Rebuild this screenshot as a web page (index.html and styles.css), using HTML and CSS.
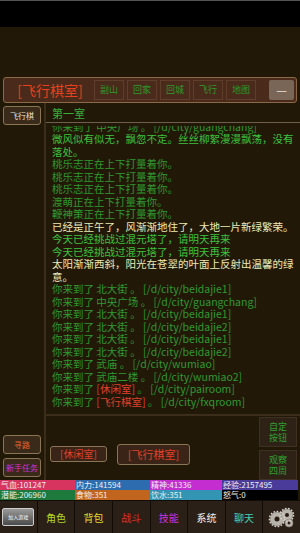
FILE: index.html
```html
<!DOCTYPE html>
<html lang="zh">
<head>
    <meta charset="UTF-8">
    <title>飞行棋室</title>
    <link rel="stylesheet" href="styles.css">
</head>
<body>
    <div class="statusbar"></div>
    <div class="spacer"></div>

    <div class="navbar">
        <div class="room-title">[飞行棋室]</div>
        <div class="nav-btn">副山</div>
        <div class="nav-btn">回家</div>
        <div class="nav-btn">回城</div>
        <div class="nav-btn">飞行</div>
        <div class="nav-btn">地图</div>
        <div class="menu-btn">—</div>
    </div>

    <div class="main">
        <div class="sidebar">
            <div class="side-btn">飞行棋</div>
        </div>
        <div class="content">
            <div class="room-name">第一室</div>
            <div class="log">
                <p>你来到了 中央广场 。 [/d/city/guangchang]</p>
                <p class="desc">微风似有似无，飘忽不定。丝丝柳絮漫漫飘荡，没有落处。</p>
                <p>桃乐志正在上下打量着你。</p>
                <p>桃乐志正在上下打量着你。</p>
                <p>桃乐志正在上下打量着你。</p>
                <p>渡萌正在上下打量着你。</p>
                <p>鞭神策正在上下打量着你。</p>
                <p class="sys">已经是正午了，风渐渐地住了，大地一片新绿繁荣。</p>
                <p class="desc">今天已经挑战过混元塔了，请明天再来</p>
                <p class="desc">今天已经挑战过混元塔了，请明天再来</p>
                <p class="sys">太阳渐渐西斜，阳光在苍翠的叶面上反射出温馨的绿意。</p>
                <p>你来到了 北大街 。 [/d/city/beidajie1]</p>
                <p>你来到了 中央广场 。 [/d/city/guangchang]</p>
                <p>你来到了 北大街 。 [/d/city/beidajie1]</p>
                <p>你来到了 北大街 。 [/d/city/beidajie2]</p>
                <p>你来到了 北大街 。 [/d/city/beidajie1]</p>
                <p>你来到了 北大街 。 [/d/city/beidajie2]</p>
                <p>你来到了 武庙 。 [/d/city/wumiao]</p>
                <p>你来到了 武庙二楼 。 [/d/city/wumiao2]</p>
                <p>你来到了 <span class="room">[休闲室]</span> 。 [/d/city/pairoom]</p>
                <p>你来到了 <span class="room">[飞行棋室]</span> 。 [/d/city/fxqroom]</p>
            </div>
        </div>
    </div>

    <div class="actions">
        <div class="action-left">
            <div class="side-btn orange">寻路</div>
            <div class="side-btn purple">新手任务</div>
        </div>
        <div class="exits">
            <div class="exit-btn">[休闲室]</div>
            <div class="exit-btn big">[飞行棋室]</div>
        </div>
        <div class="action-right">
            <div class="tall-btn">自定<br>按钮</div>
            <div class="tall-btn">观察<br>四周</div>
        </div>
    </div>

    <div class="stats">
        <div class="stat hp">气血:101247</div>
        <div class="stat mp">内力:141594</div>
        <div class="stat sp">精神:41336</div>
        <div class="stat exp">经验:2157495</div>
        <div class="stat pot">潜能:206960</div>
        <div class="stat food">食物:351</div>
        <div class="stat water">饮水:351</div>
        <div class="stat rage">怒气:0</div>
    </div>

    <div class="tabbar">
        <div class="tab"><div class="logo">加入游戏</div></div>
        <div class="tab t-role">角色</div>
        <div class="tab t-bag">背包</div>
        <div class="tab t-fight">战斗</div>
        <div class="tab t-skill">技能</div>
        <div class="tab t-sys">系统</div>
        <div class="tab t-chat">聊天</div>
        <div class="tab">
            <svg width="30" height="24" viewBox="0 0 30 24">
                <g fill="#b8b4ac" stroke="#8a867e" stroke-width="0.6">
                    <circle cx="10" cy="14" r="7"/>
                    <circle cx="20" cy="10" r="6"/>
                    <circle cx="22" cy="18" r="4"/>
                </g>
                <g fill="#2a1e14">
                    <circle cx="10" cy="14" r="2.5"/>
                    <circle cx="20" cy="10" r="2"/>
                    <circle cx="22" cy="18" r="1.4"/>
                </g>
                <g stroke="#d8d4cc" stroke-width="1.4" fill="none" stroke-dasharray="1.6 1.6">
                    <circle cx="10" cy="14" r="7.6"/>
                    <circle cx="20" cy="10" r="6.6"/>
                </g>
            </svg>
        </div>
    </div>
</body>
</html>
```

FILE: styles.css
```css
body {
    margin: 0;
    width: 300px;
    height: 533px;
    overflow: hidden;
    background: #221808;
    font-family: "Noto Sans CJK SC", "Noto Sans", sans-serif;
    display: flex;
    flex-direction: column;
}
p {
    margin: 0;
}
.statusbar {
    height: 26px;
    background: #000;
    border-top: 1px solid #555;
}
.spacer {
    height: 50px;
}
.navbar {
    height: 22px;
    margin: 0 3px;
    padding: 1px 2px;
    display: flex;
    align-items: center;
    background: #4a2a1a;
    border: 1px solid #8a6a44;
    border-radius: 3px;
}
.room-title {
    width: 88px;
    text-align: center;
    color: #e8401c;
    font-size: 14px;
}
.nav-btn {
    width: 28px;
    height: 18px;
    margin-right: 3px;
    border: 1px solid #5e3e2a;
    color: #2c9a2c;
    font-size: 9px;
    line-height: 18px;
    text-align: center;
}
.menu-btn {
    margin-left: auto;
    width: 25px;
    height: 20px;
    background: #7a6656;
    border-radius: 2px;
    color: #e8e0d8;
    font-size: 12px;
    line-height: 20px;
    text-align: center;
}
.main {
    height: 313px;
    display: flex;
}
.sidebar {
    width: 44px;
    border-right: 2px solid #3c2c1a;
    padding-top: 3px;
}
.side-btn {
    margin: 0 3px;
    height: 17px;
    border: 1px solid #8a7456;
    border-radius: 3px;
    background: #3a2a1a;
    color: #e8e0d0;
    font-size: 8px;
    line-height: 17px;
    text-align: center;
}
.content {
    flex: 1;
    display: flex;
    flex-direction: column;
    border-bottom: 2px solid #3c2c1a;
}
.room-name {
    height: 17px;
    padding: 2px 0 0 6px;
    color: #38b038;
    font-size: 11px;
    border-bottom: 1px solid #6e5e4c;
}
.log {
    flex: 1;
    margin-top: 3px;
    overflow: hidden;
    display: flex;
    flex-direction: column;
    justify-content: flex-end;
    padding: 0 4px 6px 6px;
    color: #2e9a2e;
    font-size: 10.5px;
    line-height: 12.5px;
}
.log .desc {
    color: #3cc23c;
}
.log .sys {
    color: #ecebb4;
}
.log .room {
    color: #e0402a;
}
.actions {
    height: 64px;
    display: flex;
}
.action-left {
    width: 44px;
    border-right: 2px solid #3c2c1a;
    display: flex;
    flex-direction: column;
    justify-content: flex-end;
    gap: 4px;
    padding-bottom: 3px;
}
.side-btn.orange {
    color: #e8602a;
}
.side-btn.purple {
    color: #d030d8;
}
.exits {
    flex: 1;
    display: flex;
    align-items: center;
    gap: 10px;
    padding: 12px 0 0 4px;
}
.exit-btn {
    height: 14px;
    padding: 0 9px;
    border: 1px solid #8a7456;
    border-radius: 3px;
    background: #3a2418;
    color: #e0402a;
    font-size: 10px;
    line-height: 14px;
}
.exit-btn.big {
    height: 19px;
    padding: 0 10px;
    font-size: 11px;
    line-height: 19px;
}
.action-right {
    width: 38px;
    display: flex;
    flex-direction: column;
    gap: 3px;
    padding: 1px 3px 0 0;
}
.tall-btn {
    flex: 1;
    background: #2e2216;
    border: 1px solid #3e3022;
    color: #30a030;
    font-size: 9px;
    line-height: 11px;
    display: flex;
    align-items: center;
    justify-content: center;
    text-align: center;
}
.stats {
    display: grid;
    grid-template-columns: 75px 75px 72px 76px;
    grid-auto-rows: 10px;
    padding-right: 2px;
}
.stat {
    color: #f0f0f0;
    font-size: 8px;
    line-height: 10px;
    padding-left: 1px;
    white-space: nowrap;
}
.hp { background: #d83460; }
.mp { background: #2e6cb0; }
.sp { background: #c42ed0; }
.exp { background: #4a3a9a; }
.pot { background: #1e7a3c; }
.food { background: #c0641e; }
.water { background: #3494b4; }
.rage { background: #000; }
.tabbar {
    flex: 1;
    display: grid;
    grid-template-columns: repeat(8, 1fr);
    gap: 1px;
    background: #120c06;
    padding-top: 1px;
}
.tab {
    background: #2a2018;
    display: flex;
    align-items: center;
    justify-content: center;
    font-size: 10px;
}
.logo {
    width: 30px;
    height: 16px;
    background: linear-gradient(#9a9a9a, #4a4a4a);
    border: 1px solid #ccc;
    border-radius: 2px;
    color: #fff;
    font-size: 5px;
    line-height: 16px;
    text-align: center;
}
.t-role { color: #b8d820; }
.t-bag { color: #e8d830; }
.t-fight { color: #e03024; }
.t-skill { color: #d030d8; }
.t-sys { color: #f0f0f0; }
.t-chat { color: #40d0b0; }
```
